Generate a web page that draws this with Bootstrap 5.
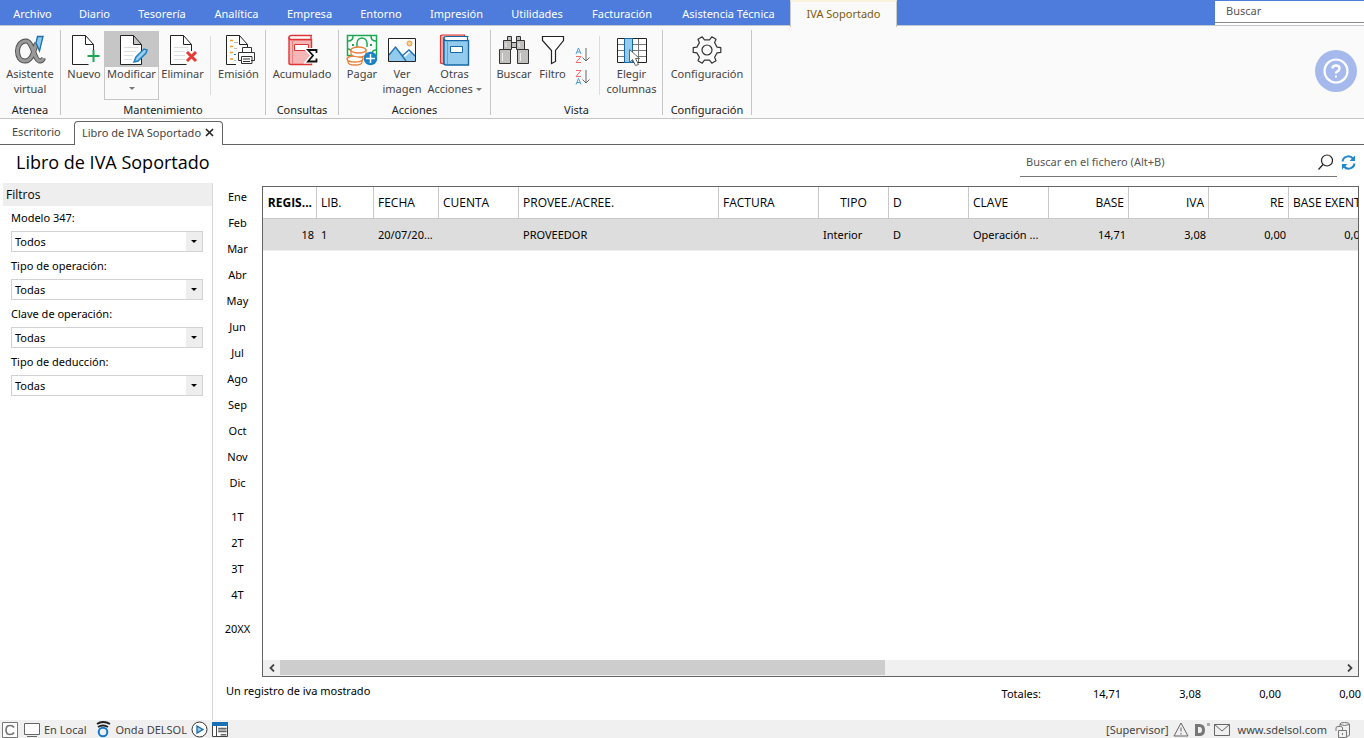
<!DOCTYPE html>
<html lang="es">
<head>
<meta charset="utf-8">
<meta name="viewport" content="width=device-width, initial-scale=1">
<title>Libro de IVA Soportado</title>
<link href="https://cdn.jsdelivr.net/npm/bootstrap@5.3.0/dist/css/bootstrap.min.css" rel="stylesheet">
<style>
body{font-family:"Noto Sans","Open Sans",sans-serif;font-size:11px;line-height:15px;color:#000;background:#fff}
button{background:none;border:0;padding:0;color:inherit}
a{color:inherit;text-decoration:none}
svg{display:block;flex:none}
/* menu bar */
.menubar{background:#4e7cdc;height:26px;border-bottom:1px solid #c3c6ce}
.menu-tabs{display:grid;grid-template-columns:65px 59px 76px 73px 73px 70px 81px 80px 90px 123px 107px;height:26px}
.menu-tabs a{color:#fff;text-align:center;line-height:27px;white-space:nowrap}
.menu-tabs a.current{background:#fafafa;color:#7d5b0b;border:1px solid #c9c9c9;border-top:2px solid #f7f3dc;border-bottom:0;line-height:24px}
.top-search{width:149px;height:22px;background:#fff;border:0;border-bottom:1px solid #8a8a8a;padding:0 11px 2px;margin-top:1px;border-radius:0;box-shadow:0 2px 0 #fff}
input::placeholder{color:#555;opacity:1}
/* ribbon */
.ribbon{background:#fafafa;height:93px;border-bottom:1px solid #c6c6c6;color:#444}
.rgroup{border-right:1px solid #c6c6c6;height:85px;margin-top:4px}
.rgroup h2{font-size:11px;line-height:11px;color:#222;margin:0;text-align:center;font-weight:400}
.g-atenea{width:61px}.g-mant{width:205px}.g-cons{width:73px}.g-acc{width:152px}.g-vista{width:172px}.g-conf{width:89px}
.tools{padding:1px 3px 0}
.ritem{display:flex;flex-direction:column;align-items:center;height:69px;padding:2px 0 0;white-space:nowrap;border:1px solid transparent;line-height:15px}
.ritem.picked{border-color:#c6c6c6;background:linear-gradient(#c6c6c6 35px,#fafafa 35px)}
.w37{width:37px}.w40{width:40px}.w47{width:47px}.w55{width:55px}.w65{width:65px}
.divider{width:1px;height:59px;background:#dcdcdc;margin-top:5px}
.caret{display:inline-block;border:3px solid transparent;border-top-color:#777;border-bottom:0;vertical-align:2px}
.caret.below{margin-top:6px}
.help{width:42px;height:42px;border-radius:50%;background:#a5b9ec;margin:24px 7px 0 0}
/* document tabs */
.doctabs{height:26px;border-bottom:1px solid #646464;color:#444}
.doctabs .plain{width:74px;padding:5px 0 0 12px}
.doctabs .open{width:149px;height:24px;margin-top:2px;border:1px solid #646464;border-bottom:0;border-radius:4px 4px 0 0;background:#fff;padding:0 8px 3px 7px}
/* title */
.titlebar{height:38px}
h1{font-size:18px;line-height:24px;margin:5px 0 0 16px;font-weight:400;font-family:"Open Sans",sans-serif}
.file-search{width:317px;height:30px;margin-top:2px;border-bottom:1px solid #777}
.file-search input{border:0;padding:0 0 0 6px;outline:0;background:none}
/* filters */
.filters{width:213px;border-right:1px solid #d8d8d8;padding-left:3px}
.filters h2{font-size:12px;line-height:24px;height:23px;background:#eee;margin:0;padding-left:3px;font-family:"Open Sans",sans-serif}
.filters form{padding:3px 9px 0 8px}
.field{height:48px}
.field label{display:block;line-height:17px;height:22px}
.field select{width:100%;height:21px;border:1px solid #d2d2d2;border-radius:0;padding:0 3px;appearance:none;color:#000;background:linear-gradient(#eee,#eee) right/16px 100% no-repeat #fff}
.pick{position:relative}
.pick::after{content:"";position:absolute;right:6px;top:9px;border:3px solid transparent;border-top-color:#000;border-bottom:0;pointer-events:none}
/* months */
.periods{width:49px}
.periods button{display:block;width:100%;height:26px}
.periods .apart{margin-top:8px}
/* records */
.shrinkable{min-width:0;min-height:0}
.grid-box{border:1px solid #646464;margin:3px 5px 0 0;min-width:0;overflow:hidden}
.records{table-layout:fixed;width:1105px;border-collapse:separate;border-spacing:0}
.records th,.records td{height:32px;padding:0 4px;white-space:nowrap;font-weight:400}
.records th{font-family:"Open Sans",sans-serif;font-size:12px;border-right:1px solid #c8c8c8;border-bottom:1px solid #c8c8c8}
.records td{background:#ddd;border-bottom:1px solid #eee}
.records td.text-end{padding-right:3px}
.records th.key{font-weight:700;text-align:right}
.c54{width:54px}.c57{width:57px}.c65{width:65px}.c70{width:70px}.c80{width:80px}.c100{width:100px}.c200{width:200px}
.hscroll{height:16px;background:#f0f0f0}
.hscroll button{width:17px;height:16px;display:flex;align-items:center;justify-content:center}
.thumb{background:#cdcdcd;width:57%;height:15px}
.footer-line{height:43px;padding-left:13px}
.shown{padding-top:6px}
.totals{display:grid;grid-template-columns:repeat(5,80px);text-align:right;padding:9px 3px 0 0}
.status{height:18px;background:#f0f0f0;color:#444;line-height:18px;padding:1px 14px 0 2px}
</style>
</head>
<body class="d-flex flex-column vh-100 overflow-hidden">

<header>
  <nav class="menubar d-flex justify-content-between" aria-label="Menú principal">
    <div class="menu-tabs">
      <a href="#">Archivo</a><a href="#">Diario</a><a href="#">Tesorería</a><a href="#">Analítica</a><a href="#">Empresa</a><a href="#">Entorno</a><a href="#">Impresión</a><a href="#">Utilidades</a><a href="#">Facturación</a><a href="#">Asistencia Técnica</a><a href="#" class="current" aria-current="page">IVA Soportado</a>
    </div>
    <input class="top-search" type="text" placeholder="Buscar" aria-label="Buscar">
  </nav>

  <div class="ribbon d-flex">
    <section class="rgroup g-atenea d-flex flex-column justify-content-between">
      <div class="tools d-flex justify-content-center">
        <button class="ritem" type="button">
          <svg width="32" height="32" viewBox="0 0 32 32"><path d="M22.500 9C20 17 18 27 11 27 6 27 3.500 22.500 3.500 17S7 7 12 7c7 0 8 20 14 20 2 0 3-1.500 3.500-3" fill="none" stroke="#4c4c4c" stroke-width="5"/><path d="M22.500 9C20 17 18 27 11 27 6 27 3.500 22.500 3.500 17S7 7 12 7c7 0 8 20 14 20 2 0 3-1.500 3.500-3" fill="none" stroke="#999" stroke-width="3.200"/><path d="M23.500 2.500H29L25.500 17l-3.500-8z" fill="#8cc8f0" stroke="#1c6ea8" stroke-width="1.300"/></svg>
          Asistente<br>virtual</button>
      </div>
      <h2>Atenea</h2>
    </section>

    <section class="rgroup g-mant d-flex flex-column justify-content-between">
      <div class="tools d-flex">
        <button class="ritem w40" type="button">
          <svg width="32" height="32" viewBox="0 0 32 32"><path d="M25.500 17V10.500L17.500 1.500H4.500v29h16M17.500 1.500v9h8" fill="#fff" stroke="#222"/><path d="M25.500 16v12M19.500 22h12" stroke="#1ca850" stroke-width="2"/></svg>
          Nuevo</button>
        <button class="ritem w55 picked" type="button">
          <svg width="32" height="32" viewBox="0 0 32 32"><path d="M4.500 1.500h13l8 9v20h-21zM17.500 1.500v9h8" fill="#fff" stroke="#222"/><path d="M8 13.500h14M8 17.500h12M8 21.500h9M8 25.500h8" stroke="#ddd"/><path d="M18 28l2-5 8-8 3 1-1 3-8 8z" fill="#9bd0f2" stroke="#2080bd" stroke-width="1.500"/></svg>
          Modificar<span class="caret below"></span></button>
        <button class="ritem w47" type="button">
          <svg width="32" height="32" viewBox="0 0 32 32"><path d="M24.500 17V10.500L16.500 1.500H3.500v29h16M16.500 1.500v9h8" fill="#fff" stroke="#222"/><path d="M7 13.500h14M7 17.500h11M7 21.500h11M7 25.500h11" stroke="#ddd"/><path d="M20 18l9 9M29 18l-9 9" stroke="#e83a35" stroke-width="3"/></svg>
          Eliminar</button>
        <span class="divider ms-1 me-1"></span>
        <button class="ritem w47" type="button">
          <svg width="32" height="32" viewBox="0 0 32 32"><path d="M13 30.500H3.500v-29h13l8 9V13M16.500 1.500v9h8" fill="#fff" stroke="#222"/><path d="M7 6.500h3M7 12.500h3M7 18.500h3M7 25h3" stroke="#f0a030" stroke-width="1.500"/><path d="M11 8.500h4M11 14.500h3M11 26.500h2" stroke="#bbb"/><path d="M11 20.500h2" stroke="#1a82c6"/><path d="M19.500 18v-4.500h9V18M19 26.500h-3.500v-8h16v8H28M18.500 22.500h10.500v7H18.500z" fill="#fff" stroke="#333"/><path d="M20 25h7M20 27.500h7" stroke="#333"/></svg>
          Emisión</button>
      </div>
      <h2>Mantenimiento</h2>
    </section>

    <section class="rgroup g-cons d-flex flex-column justify-content-between">
      <div class="tools d-flex justify-content-center">
        <button class="ritem" type="button">
          <svg width="32" height="32" viewBox="0 0 32 32"><path d="M3 3v26q0 1.500 2 1.500h20.500V5.500H5Q3 5.500 3 3z" fill="#f4b6b6" stroke="#e03535" stroke-width="1.400"/><path d="M26 1.500H5.500q-2.500 0-2.500 2t2.500 2H26M25 2v3" fill="#fff" stroke="#e03535" stroke-width="1.300"/><path d="M6.500 6v24" stroke="#e98080"/><path d="M8.500 10.500h14v6h-14z" fill="#fff" stroke="#e03535"/><path d="M30.500 19v-3H21.500l5 5.500-5 6h9v-3" fill="none" stroke="#fff" stroke-width="4"/><path d="M30.500 19v-3H22l5 5.500-5 6h8.500v-3" fill="none" stroke="#111" stroke-width="1.800"/></svg>
          Acumulado</button>
      </div>
      <h2>Consultas</h2>
    </section>

    <section class="rgroup g-acc d-flex flex-column justify-content-between">
      <div class="tools d-flex">
        <button class="ritem w40" type="button">
          <svg width="32" height="32" viewBox="0 0 32 32"><path d="M1.500 1.500h29v20h-29z" fill="#fff" stroke="#1ca850" stroke-width="1.500"/><path d="M2 7q5 0 5-5M30 7q-5 0-5-5M2 15q3 0 5 5M25 21q1-5 5-5M11 13q-1-9 5-9t5 9" fill="none" stroke="#1ca850" stroke-width="1.500"/><path d="M6 10h2v2H6zm18 0h2v2h-2z" fill="#1ca850"/><g fill="#fff" stroke="#e8803c" stroke-width="1.300"><path d="M2 25v3q0 3 7 3t7-3v-4z"/><ellipse cx="9" cy="25" rx="8" ry="3"/><path d="M5 16v4q2 3 8 3t7-3v-4z"/><ellipse cx="12.500" cy="16" rx="7.500" ry="3"/></g><circle cx="24.500" cy="24.500" r="6.800" fill="#1a82c6"/><path d="M24.500 20v9M20 24.500h9" stroke="#fff" stroke-width="1.500"/></svg>
          Pagar</button>
        <button class="ritem w40" type="button">
          <svg width="32" height="32" viewBox="0 0 32 32"><path d="M2.500 4.500h27v23h-27z" fill="#fff"/><path d="M3 21l7-8 9 10 6-6 4 4v6H3z" fill="#92cbed"/><path d="M3 21l6.500-8L20 27M16 22l7-6 6 6" fill="none" stroke="#1f70b0" stroke-width="1.300"/><circle cx="23.500" cy="9.500" r="2.500" fill="#fcd29a" stroke="#ee9135"/><path d="M2.500 4.500h27v23h-27z" fill="none" stroke="#222"/></svg>
          Ver<br>imagen</button>
        <button class="ritem w65" type="button">
          <svg width="32" height="32" viewBox="0 0 32 32"><path d="M1.500 2v27l3 1V4h21V1H4Q1.500 1 1.500 2z" fill="#f4b6b6" stroke="#e03535" stroke-width="1.200"/><path d="M5 4v25q0 2 2 2h22.500V6.500H7Q5 6.500 5 4z" fill="#92cbed" stroke="#1868a8" stroke-width="1.400"/><path d="M29.500 2.500H7.500q-2.500 0-2.500 2t2.500 2h22M28.500 3v3" fill="#fff" stroke="#1868a8" stroke-width="1.200"/><path d="M8.500 7v23" stroke="#5fa5d3"/><path d="M11.500 12.500h12v6h-12z" fill="#fff" stroke="#1868a8"/></svg>
          Otras<span>Acciones <span class="caret"></span></span></button>
      </div>
      <h2>Acciones</h2>
    </section>

    <section class="rgroup g-vista d-flex flex-column justify-content-between">
      <div class="tools d-flex">
        <button class="ritem w40" type="button">
          <svg width="32" height="32" viewBox="0 0 32 32"><path d="M1.500 15.500h11v14h-11zM19.500 15.500h11v14h-11zM5.500 6.500h8v9h-8zM18.500 6.500h8v9h-8zM9.500 2.500h4v4h-4zM18.500 2.500h4v4h-4zM13.500 8.500h5v5h-5z" fill="#c2c0be" stroke="#333"/><path d="M4.500 19v8M22.500 19v8M8 9v4M21 9v4" stroke="#eee"/></svg>
          Buscar</button>
        <button class="ritem w37" type="button">
          <svg width="32" height="32" viewBox="0 0 32 32"><path d="M5.500 2.500h21v4l-8 10v11l-4 2v-13l-9-10z" fill="#fff" stroke="#222" stroke-width="1.200"/></svg>
          Filtro</button>
        <div class="d-flex flex-column gap-1 ps-1 pt-3">
          <button type="button" aria-label="Orden ascendente"><svg width="16" height="18" viewBox="0 0 16 18"><path d="M1 7l2.500-6L6 7M2 5h3" fill="none" stroke="#4a9fd8"/><path d="M1 9.500h5L1 15.500h5" fill="none" stroke="#f06b6b"/><path d="M11 1v13M7.500 10.500L11 14l3.500-3.500" fill="none" stroke="#666"/></svg></button>
          <button type="button" aria-label="Orden descendente"><svg width="16" height="18" viewBox="0 0 16 18"><path d="M1 1.500h5L1 7.500h5" fill="none" stroke="#f06b6b"/><path d="M1 15.500l2.500-6 2.500 6M2 13.500h3" fill="none" stroke="#4a9fd8"/><path d="M11 1v13M7.500 10.500L11 14l3.500-3.500" fill="none" stroke="#666"/></svg></button>
        </div>
        <span class="divider ms-2 me-1"></span>
        <button class="ritem w55" type="button">
          <svg width="32" height="32" viewBox="0 0 32 32"><path d="M1.500 4.500h29v24h-29z" fill="#fff" stroke="#222"/><path d="M2 10.500h28M2 16.500h28M2 22.500h28M22.500 5v23" stroke="#777"/><path d="M8.500 4.500h8v24h-8z" fill="#92cbed" stroke="#1868a8"/><path d="M13.500 15.500v13l3-3 3 6 3-1-3-6h4z" fill="#fff" stroke="#666"/></svg>
          Elegir<br>columnas</button>
      </div>
      <h2>Vista</h2>
    </section>

    <section class="rgroup g-conf d-flex flex-column justify-content-between">
      <div class="tools d-flex justify-content-center">
        <button class="ritem" type="button">
          <svg width="32" height="32" viewBox="0 0 32 32" fill="none" stroke="#333" stroke-width="1.200" stroke-linejoin="round"><path d="M26.100 13.100l3.700.500v4.800l-3.700.500-2.500 4.400 1.400 3.400-4.200 2.500-2.300-3h-5l-2.300 3L7 26.700l1.400-3.400-2.500-4.400-3.700-.500v-4.800l3.700-.500 2.500-4.400L7 5.300l4.200-2.500 2.300 3h5l2.300-3L25 5.300l-1.400 3.400z"/><circle cx="16" cy="16" r="5"/></svg>
          Configuración</button>
      </div>
      <h2>Configuración</h2>
    </section>

    <button class="help ms-auto d-flex align-items-center justify-content-center" type="button" aria-label="Ayuda">
      <svg width="26" height="26" viewBox="0 0 26 26" fill="none" stroke="#fff" stroke-width="2.200"><circle cx="13" cy="13" r="11.500"/><path d="M9.500 10.500Q9.500 7.500 13 7.500t3.500 3q0 2-2 2.800-1.500.7-1.500 2.200" stroke-width="2.400"/><path d="M12 17.500h2v2h-2z" fill="#fff" stroke="none"/></svg>
    </button>
  </div>

  <nav class="doctabs d-flex" aria-label="Documentos">
    <a class="plain" href="#">Escritorio</a>
    <div class="open d-flex align-items-center justify-content-between">
      <a href="#">Libro de IVA Soportado</a>
      <button type="button" aria-label="Cerrar"><svg width="9" height="9" viewBox="0 0 9 9"><path d="M1 1l7 7M8 1L1 8" stroke="#222" stroke-width="1.600"/></svg></button>
    </div>
  </nav>
</header>

<div class="titlebar d-flex justify-content-between">
  <h1>Libro de IVA Soportado</h1>
  <div class="d-flex">
    <div class="file-search d-flex align-items-center">
      <input class="flex-grow-1" type="text" placeholder="Buscar en el fichero (Alt+B)" aria-label="Buscar en el fichero">
      <svg class="me-1" width="16" height="16" viewBox="0 0 16 16" fill="none" stroke="#222" stroke-width="1.200"><circle cx="10" cy="6.500" r="5.500"/><path d="M6 10.500L1.500 15.500"/></svg>
    </div>
    <button class="ms-1 me-2 mb-1" type="button" aria-label="Actualizar"><svg width="15" height="15" viewBox="0 0 15 15"><path d="M1.500 6.500a6 6 0 0 1 10.500-3M13.500 8.500a6 6 0 0 1-10.500 3" fill="none" stroke="#2288cc" stroke-width="2"/><path d="M14 .500V6H8.500zM1 14.500V9h5.500z" fill="#2288cc"/></svg></button>
  </div>
</div>

<main class="shrinkable d-flex flex-grow-1">
  <aside class="filters flex-shrink-0">
    <h2>Filtros</h2>
    <form>
      <div class="field"><label for="f1">Modelo 347:</label><div class="pick"><select id="f1"><option>Todos</option></select></div></div>
      <div class="field"><label for="f2">Tipo de operación:</label><div class="pick"><select id="f2"><option>Todas</option></select></div></div>
      <div class="field"><label for="f3">Clave de operación:</label><div class="pick"><select id="f3"><option>Todas</option></select></div></div>
      <div class="field"><label for="f4">Tipo de deducción:</label><div class="pick"><select id="f4"><option>Todas</option></select></div></div>
    </form>
  </aside>
  <div class="shrinkable d-flex flex-column flex-grow-1">
    <div class="d-flex flex-grow-1">
      <div class="periods flex-shrink-0">
        <button type="button">Ene</button><button type="button">Feb</button><button type="button">Mar</button><button type="button">Abr</button><button type="button">May</button><button type="button">Jun</button><button type="button">Jul</button><button type="button">Ago</button><button type="button">Sep</button><button type="button">Oct</button><button type="button">Nov</button><button type="button">Dic</button>
        <button class="apart" type="button">1T</button><button type="button">2T</button><button type="button">3T</button><button type="button">4T</button>
        <button class="apart" type="button">20XX</button>
      </div>
      <div class="grid-box d-flex flex-column flex-grow-1">
        <table class="records">
          <colgroup><col class="c54"><col class="c57"><col class="c65"><col class="c80"><col class="c200"><col class="c100"><col class="c70"><col class="c80"><col class="c80"><col class="c80"><col class="c80"><col class="c80"><col class="c80"></colgroup>
          <thead><tr><th class="key">REGIS...</th><th>LIB.</th><th>FECHA</th><th>CUENTA</th><th>PROVEE./ACREE.</th><th>FACTURA</th><th class="text-center">TIPO</th><th>D</th><th>CLAVE</th><th class="text-end">BASE</th><th class="text-end">IVA</th><th class="text-end">RE</th><th>BASE EXENTA</th></tr></thead>
          <tbody><tr><td class="text-end">18</td><td>1</td><td>20/07/20...</td><td></td><td>PROVEEDOR</td><td></td><td>Interior</td><td>D</td><td>Operación ...</td><td class="text-end">14,71</td><td class="text-end">3,08</td><td class="text-end">0,00</td><td class="text-end">0,00</td></tr></tbody>
        </table>
        <div class="hscroll d-flex mt-auto">
          <button type="button" aria-label="Desplazar a la izquierda"><svg width="6" height="8" viewBox="0 0 6 8"><path d="M5 .500L1.500 4 5 7.500" fill="none" stroke="#444" stroke-width="1.800"/></svg></button>
          <div class="flex-grow-1"><div class="thumb"></div></div>
          <button type="button" aria-label="Desplazar a la derecha"><svg width="6" height="8" viewBox="0 0 6 8"><path d="M1 .500L4.500 4 1 7.500" fill="none" stroke="#444" stroke-width="1.800"/></svg></button>
        </div>
      </div>
    </div>
    <div class="footer-line d-flex justify-content-between">
      <div class="shown">Un registro de iva mostrado</div>
      <div class="totals"><span>Totales:</span><span>14,71</span><span>3,08</span><span>0,00</span><span>0,00</span></div>
    </div>
  </div>
</main>

<footer class="status d-flex justify-content-between">
  <div class="d-flex align-items-center">
    <svg width="16" height="16" viewBox="0 0 16 16" fill="none"><path d="M.500.500h15v15H.500z" fill="#fff" stroke="#777"/><path d="M12 5.500Q11 3.500 8 3.500q-4 0-4 4.500t4 4.500q3 0 4-2" stroke="#777" stroke-width="1.700"/></svg>
    <svg class="ms-1" width="18" height="16" viewBox="0 0 18 16"><path d="M2.500 1.500h15v11h-15z" fill="#fff" stroke="#666"/><path d="M5 14.500h10" stroke="#666"/></svg>
    <span class="ms-1">En Local</span>
    <svg class="ms-2" width="17" height="17" viewBox="0 0 17 17" fill="none"><path d="M3 3Q9-1 16 3M4 6q5-3 10 0" stroke="#222" stroke-width="2"/><circle cx="9" cy="11" r="4.300" stroke="#1279cf" stroke-width="2"/></svg>
    <span class="ms-1">Onda DELSOL</span>
    <svg class="ms-1" width="17" height="17" viewBox="0 0 17 17"><circle cx="8.500" cy="8.500" r="7.500" fill="#fff" stroke="#333"/><path d="M6 5l6 3.500L6 12z" fill="#92cbed" stroke="#1868a8" stroke-width="1.300"/></svg>
    <svg class="ms-1" width="16" height="15" viewBox="0 0 16 15"><path d="M.500.500h15v14H.500z" fill="#fff" stroke="#444"/><path d="M0 0h16v4H0z" fill="#1c70b5"/><path d="M4.500 4v10" stroke="#444"/><path d="M6 5.500h8.500v5H6zM8.500 12h6v2h-6z" fill="#aaa"/><path d="M6.500 6.500h8M6.500 9.500h8M9 12.500h5" stroke="#666"/></svg>
  </div>
  <div class="d-flex align-items-center">
    <span>[Supervisor]</span>
    <svg class="ms-1" width="16" height="15" viewBox="0 0 16 15"><path d="M8 1l7 13H1zM8 5.500v4M8 11v1.500" fill="none" stroke="#666"/></svg>
    <svg class="ms-1" width="17" height="14" viewBox="0 0 17 14"><path d="M3.500 2.500H6.500q4 0 4 4.500t-4 4.500H3.500z" fill="none" stroke="#777" stroke-width="3"/><path d="M14 0h3v3h-3z" fill="#aaa"/></svg>
    <svg class="ms-1" width="16" height="12" viewBox="0 0 16 12"><path d="M.500.500h15v11H.500zL8 7l7.500-6.500" fill="none" stroke="#666"/></svg>
    <a class="ms-2" href="#">www.sdelsol.com</a>
    <svg class="ms-2" width="15" height="16" viewBox="0 0 15 16" fill="none" stroke="#777"><path d="M5 4V2q0-1.500 4.500-1.500T14.500 2v11q0 1-3 1.500M5 2.500q4 2 9.500 0"/><path d="M3.500 8.500h8v7h-8zM1 9V6q0-1.500 2-1.500h2.500q2 0 2 1.500v2.500M7.500 11v2" fill="#f0f0f0"/></svg>
  </div>
</footer>
<script src="https://cdn.jsdelivr.net/npm/bootstrap@5.3.0/dist/js/bootstrap.bundle.min.js"></script>
</body>
</html>
